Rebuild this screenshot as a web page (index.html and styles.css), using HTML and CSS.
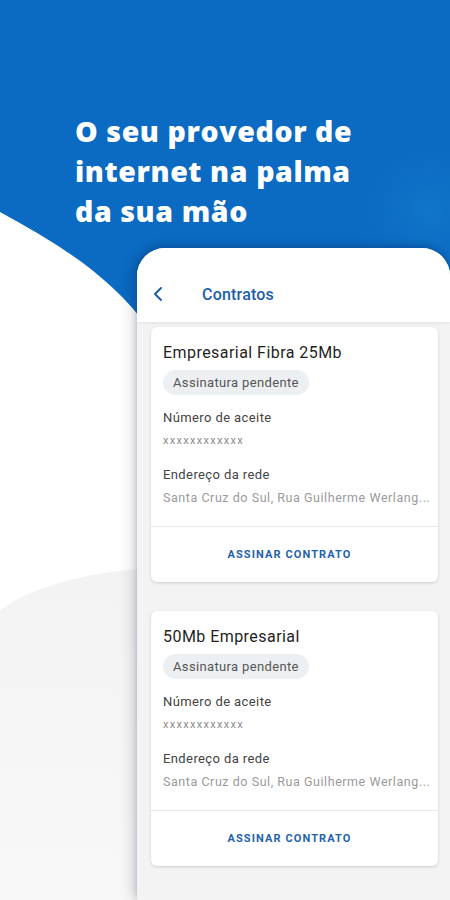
FILE: index.html
```html
<!DOCTYPE html>
<html lang="pt-BR">
<head>
<meta charset="utf-8">
<title>Contratos</title>
<link rel="stylesheet" href="styles.css">
</head>
<body>
<div class="screen">
  <svg class="bg" width="450" height="900" viewBox="0 0 450 900" aria-hidden="true">
    <defs>
      <radialGradient id="glow" cx="430" cy="210" r="90" gradientUnits="userSpaceOnUse">
        <stop offset="0" stop-color="#137ccc" stop-opacity="0.7"/>
        <stop offset="1" stop-color="#0b6ac2" stop-opacity="0"/>
      </radialGradient>
      <linearGradient id="fog" x1="0" y1="0" x2="0" y2="1">
        <stop offset="0" stop-color="#f3f3f3"/>
        <stop offset="1" stop-color="#f8f8f8"/>
      </linearGradient>
    </defs>
    <path d="M0 0 H450 V420 H160 L150 330 C110 275 60 245 0 212 Z" fill="#0b6ac2"/>
    <rect x="320" y="110" width="130" height="220" fill="url(#glow)"/>
    <path d="M0 610 Q50 575 150 568 V900 H0 Z" fill="url(#fog)"/>
  </svg>

  <h1 class="headline">O seu provedor de<br>internet na palma<br>da sua mão</h1>

  <div class="phone">
    <header class="appbar">
      <svg class="back" width="12" height="16" viewBox="0 0 12 16" aria-hidden="true">
        <path d="M9 2 L3 8 L9 14" fill="none" stroke="#1d5ea9" stroke-width="2" stroke-linecap="round" stroke-linejoin="round"/>
      </svg>
      <span class="title">Contratos</span>
    </header>
    <main class="list">
      <article class="card">
        <div class="card-body">
          <h2 class="plan">Empresarial Fibra 25Mb</h2>
          <span class="chip">Assinatura pendente</span>
          <div class="label first">Número de aceite</div>
          <div class="code">xxxxxxxxxxxx</div>
          <div class="label">Endereço da rede</div>
          <div class="addr">Santa Cruz do Sul, Rua Guilherme Werlang...</div>
        </div>
        <div class="card-foot"><span class="action">ASSINAR CONTRATO</span></div>
      </article>
      <article class="card">
        <div class="card-body">
          <h2 class="plan">50Mb Empresarial</h2>
          <span class="chip">Assinatura pendente</span>
          <div class="label first">Número de aceite</div>
          <div class="code">xxxxxxxxxxxx</div>
          <div class="label">Endereço da rede</div>
          <div class="addr">Santa Cruz do Sul, Rua Guilherme Werlang...</div>
        </div>
        <div class="card-foot"><span class="action">ASSINAR CONTRATO</span></div>
      </article>
    </main>
  </div>
</div>
</body>
</html>
```

FILE: styles.css
```css
* { box-sizing: border-box; }
html, body { margin: 0; padding: 0; }
body {
  width: 450px;
  height: 900px;
  overflow: hidden;
  background: #ffffff;
  font-family: Roboto, "Noto Sans", "Liberation Sans", sans-serif;
}
.screen {
  position: relative;
  width: 450px;
  height: 900px;
  overflow: hidden;
  display: flex;
  flex-direction: column;
}
.bg {
  position: absolute;
  left: 0;
  top: 0;
  z-index: 0;
}
.headline {
  position: relative;
  z-index: 1;
  margin: 111px 0 0 75px;
  font-family: "Open Sans", Lato, sans-serif;
  font-weight: 800;
  font-size: 28.5px;
  line-height: 40px;
  color: #ffffff;
  letter-spacing: 0.6px;
}
.phone {
  position: relative;
  z-index: 1;
  margin: 17px 0 0 137px;
  width: 313px;
  flex: 1;
  background: #ffffff;
  border-radius: 28px 28px 0 0;
  box-shadow: -6px 0 14px rgba(0, 0, 0, 0.12), 0 -2px 6px rgba(0, 40, 100, 0.25);
  display: flex;
  flex-direction: column;
  overflow: hidden;
}
.appbar {
  height: 74px;
  padding: 18px 0 0 15px;
  display: flex;
  align-items: center;
  background: #ffffff;
  box-shadow: 0 1px 3px rgba(0, 0, 0, 0.08);
  position: relative;
  z-index: 2;
}
.back { flex: none; }
.title {
  margin-left: 38px;
  font-size: 16px;
  font-weight: 500;
  color: #1d5ea9;
  letter-spacing: 0.2px;
}
.list {
  flex: 1;
  background: #f3f3f3;
  padding: 5px 12px 0 14px;
  display: flex;
  flex-direction: column;
  gap: 29px;
}
.card {
  background: #ffffff;
  border-radius: 6px;
  box-shadow: 0 1px 3px rgba(0, 0, 0, 0.16);
}
.card-body {
  padding: 16px 12px 19px 12px;
  display: flex;
  flex-direction: column;
  align-items: flex-start;
}
.plan {
  margin: 0;
  font-size: 16px;
  line-height: 20px;
  font-weight: 400;
  color: #1f1f1f;
  letter-spacing: 0.45px;
}
.chip {
  margin-top: 7px;
  height: 25px;
  padding: 0 10px;
  border-radius: 13px;
  background: #edf0f2;
  font-size: 13px;
  line-height: 25px;
  color: #555555;
  letter-spacing: 0.35px;
}
.label {
  margin-top: 17px;
  font-size: 13px;
  line-height: 18px;
  color: #444444;
  letter-spacing: 0.4px;
}
.label.first { margin-top: 14px; }
.code {
  margin-top: 6px;
  font-size: 11px;
  line-height: 16px;
  color: #8a8a8a;
  letter-spacing: 1.3px;
}
.addr {
  margin-top: 5px;
  font-size: 12.5px;
  line-height: 18px;
  color: #9a9a9a;
  white-space: nowrap;
  letter-spacing: 0.55px;
}
.card-foot {
  height: 56px;
  border-top: 1px solid #e8e8e8;
  display: flex;
  align-items: center;
  justify-content: center;
  padding: 0 10px 0 0;
}
.action {
  font-size: 11px;
  font-weight: 700;
  letter-spacing: 1.1px;
  color: #1f63ad;
}
```
